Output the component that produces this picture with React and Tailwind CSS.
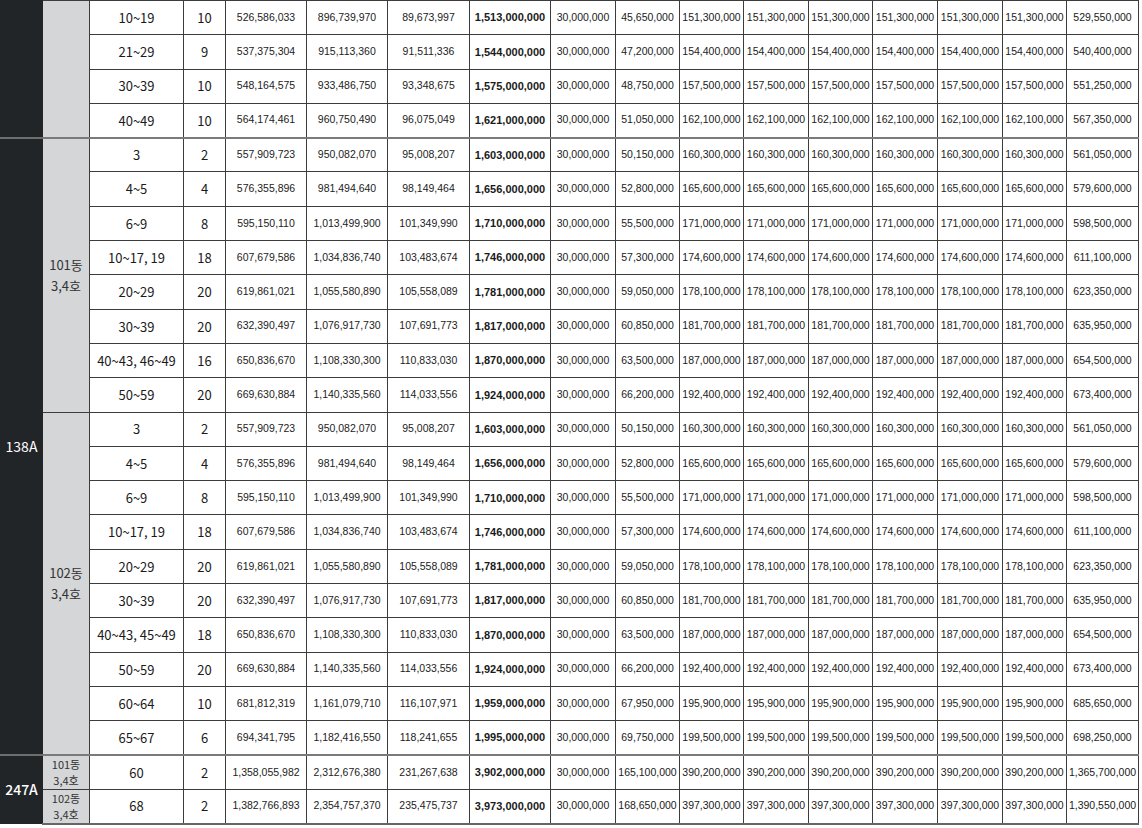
import React from "react";

const six = (v) => [v, v, v, v, v, v];

const r = (floor, count, a, b, c, total, e, mid, last) => ({
  floor,
  count,
  vals: [a, b, c],
  total,
  e,
  mids: six(mid),
  last,
});

const topRows = [
  r("10~19", "10", "526,586,033", "896,739,970", "89,673,997", "1,513,000,000", "45,650,000", "151,300,000", "529,550,000"),
  r("21~29", "9", "537,375,304", "915,113,360", "91,511,336", "1,544,000,000", "47,200,000", "154,400,000", "540,400,000"),
  r("30~39", "10", "548,164,575", "933,486,750", "93,348,675", "1,575,000,000", "48,750,000", "157,500,000", "551,250,000"),
  r("40~49", "10", "564,174,461", "960,750,490", "96,075,049", "1,621,000,000", "51,050,000", "162,100,000", "567,350,000"),
];

const common = [
  r("3", "2", "557,909,723", "950,082,070", "95,008,207", "1,603,000,000", "50,150,000", "160,300,000", "561,050,000"),
  r("4~5", "4", "576,355,896", "981,494,640", "98,149,464", "1,656,000,000", "52,800,000", "165,600,000", "579,600,000"),
  r("6~9", "8", "595,150,110", "1,013,499,900", "101,349,990", "1,710,000,000", "55,500,000", "171,000,000", "598,500,000"),
  r("10~17, 19", "18", "607,679,586", "1,034,836,740", "103,483,674", "1,746,000,000", "57,300,000", "174,600,000", "611,100,000"),
  r("20~29", "20", "619,861,021", "1,055,580,890", "105,558,089", "1,781,000,000", "59,050,000", "178,100,000", "623,350,000"),
  r("30~39", "20", "632,390,497", "1,076,917,730", "107,691,773", "1,817,000,000", "60,850,000", "181,700,000", "635,950,000"),
];

const r40 = (label, count) =>
  r(label, count, "650,836,670", "1,108,330,300", "110,833,030", "1,870,000,000", "63,500,000", "187,000,000", "654,500,000");
const r50 = r("50~59", "20", "669,630,884", "1,140,335,560", "114,033,556", "1,924,000,000", "66,200,000", "192,400,000", "673,400,000");

const dong101 = [...common, r40("40~43, 46~49", "16"), r50];
const dong102 = [
  ...common,
  r40("40~43, 45~49", "18"),
  r50,
  r("60~64", "10", "681,812,319", "1,161,079,710", "116,107,971", "1,959,000,000", "67,950,000", "195,900,000", "685,650,000"),
  r("65~67", "6", "694,341,795", "1,182,416,550", "118,241,655", "1,995,000,000", "69,750,000", "199,500,000", "698,250,000"),
];

const row247a = r("60", "2", "1,358,055,982", "2,312,676,380", "231,267,638", "3,902,000,000", "165,100,000", "390,200,000", "1,365,700,000");
const row247b = r("68", "2", "1,382,766,893", "2,354,757,370", "235,475,737", "3,973,000,000", "168,650,000", "397,300,000", "1,390,550,000");

// flatten to rows with rowSpan info
const rows = [];
topRows.forEach((d, i) =>
  rows.push({ d, type: i === 0 ? { span: 4, label: "" } : null, dong: i === 0 ? { span: 4, lines: [] } : null })
);
dong101.forEach((d, i) =>
  rows.push({
    d,
    sep: i === 0,
    type: i === 0 ? { span: dong101.length + dong102.length, label: "138A" } : null,
    dong: i === 0 ? { span: dong101.length, lines: ["101동", "3,4호"] } : null,
  })
);
dong102.forEach((d, i) =>
  rows.push({ d, dong: i === 0 ? { span: dong102.length, lines: ["102동", "3,4호"] } : null })
);
rows.push({ d: row247a, sep: true, type: { span: 2, label: "247A", bold: true }, dong: { span: 1, lines: ["101동", "3,4호"], tight: true } });
rows.push({ d: row247b, last: true, dong: { span: 1, lines: ["102동", "3,4호"], tight: true } });

const widths = [42, 47, 94, 42, 81, 81, 82, 81, 65, 64, 64, 65, 64, 65, 65, 64, 72];

const kr = "font-['Noto_Sans_CJK_KR',sans-serif]";
const num = "font-['Liberation_Sans',sans-serif]";

export default function App() {
  return (
    <div className="w-[1142px] h-[828px] bg-white overflow-hidden">
      <table className="table-fixed border-collapse w-[1138px] text-[#1a1a1a]">
        <colgroup>
          {widths.map((w, i) => (
            <col key={i} style={{ width: w }} />
          ))}
        </colgroup>
        <tbody>
          {rows.map((row, i) => {
            const { d } = row;
            const line = row.sep ? "border-t-2 border-t-[#7a7a7a]" : "";
            const bottom = row.last ? "border-b-2 border-b-[#666]" : "";
            const td = `border border-[#3c3c3c] p-0 text-center align-middle whitespace-nowrap ${line} ${bottom}`;
            return (
              <tr key={i} className="h-[34.3px]">
                {row.type && (
                  <td
                    rowSpan={row.type.span}
                    className={`bg-[#222528] border border-[#222528] ${row.sep ? "border-t-2 border-t-[#6e6e6e]" : ""} text-white text-[14px] ${row.type.bold ? "font-medium" : "font-normal"} text-center ${kr}`}
                  >
                    {row.type.label}
                  </td>
                )}
                {row.dong && (
                  <td
                    rowSpan={row.dong.span}
                    className={`${td} bg-[#d5d6d8] text-[#333] ${kr} ${row.dong.tight ? "text-[11px] leading-[16px]" : "text-[13px] leading-[21px]"}`}
                  >
                    {row.dong.lines.map((l, k) => (
                      <div key={k}>{l}</div>
                    ))}
                  </td>
                )}
                <td className={`${td} text-[13px] ${kr}`}>{d.floor}</td>
                <td className={`${td} text-[13px] ${kr}`}>{d.count}</td>
                {d.vals.map((v, k) => (
                  <td key={k} className={`${td} text-[10.5px] text-[#222] ${num}`}>
                    {v}
                  </td>
                ))}
                <td className={`${td} text-[11px] font-bold ${num}`}>{d.total}</td>
                <td className={`${td} text-[10.5px] ${num}`}>30,000,000</td>
                <td className={`${td} text-[10.5px] ${num}`}>{d.e}</td>
                {d.mids.map((v, k) => (
                  <td key={k} className={`${td} text-[10.5px] ${num}`}>
                    {v}
                  </td>
                ))}
                <td className={`${td} text-[10.5px] ${num}`}>{d.last}</td>
              </tr>
            );
          })}
        </tbody>
      </table>
    </div>
  );
}
